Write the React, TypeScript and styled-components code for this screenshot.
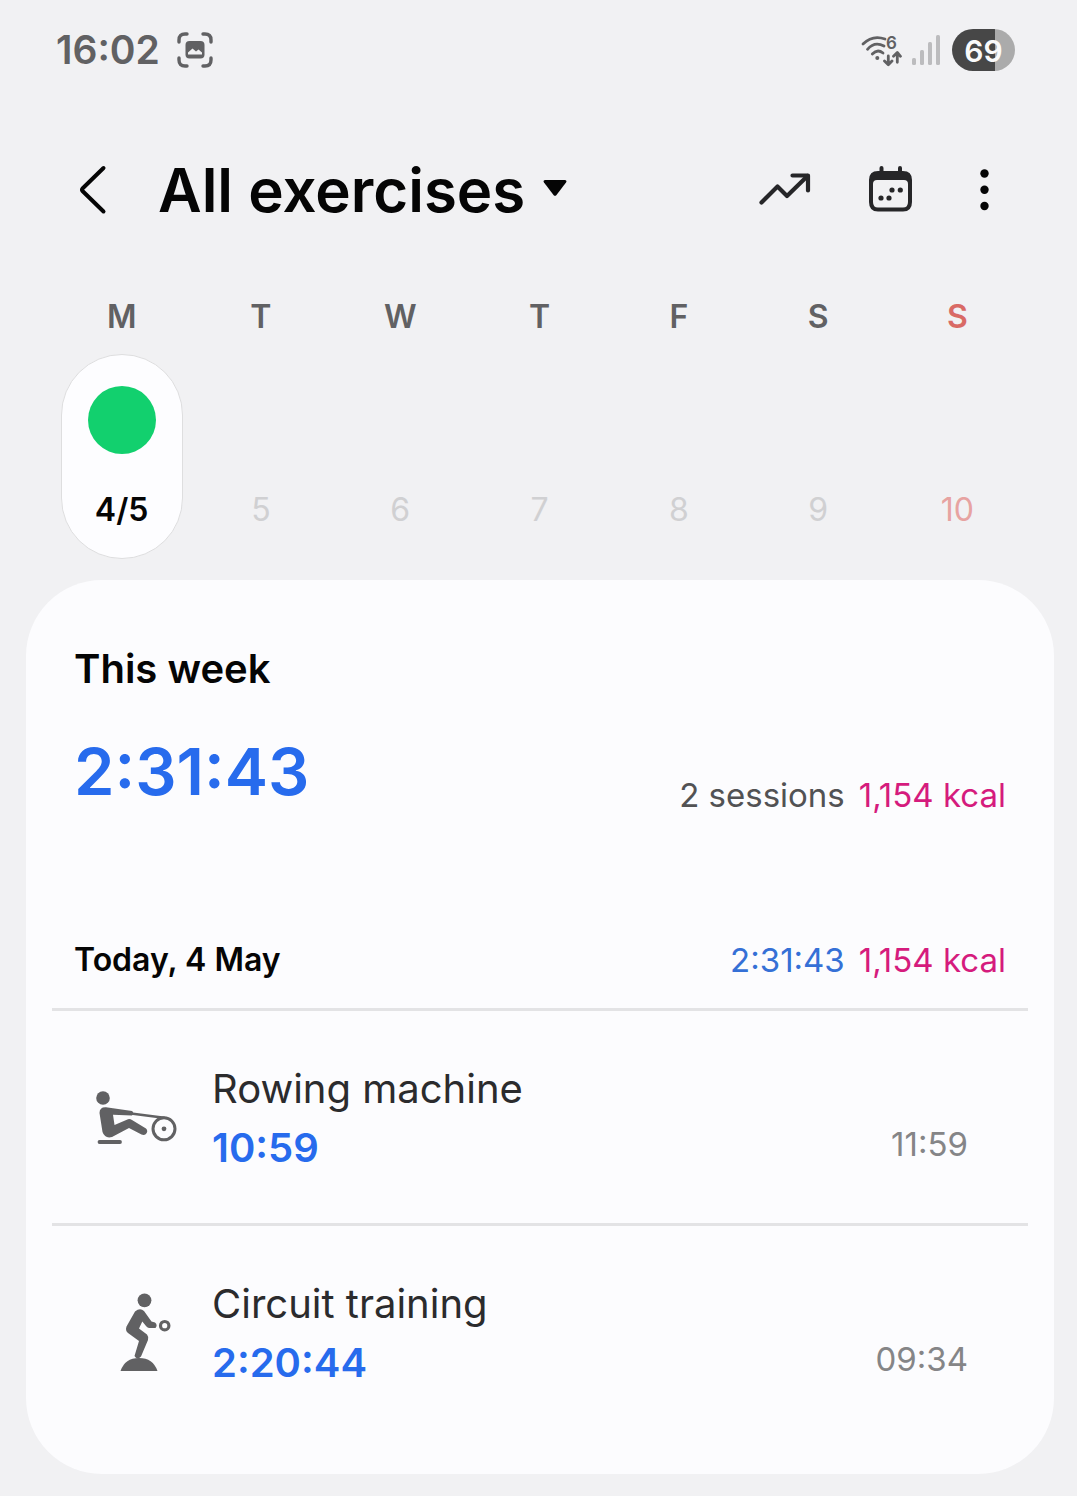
import React from 'react';
import styled, { createGlobalStyle } from 'styled-components';

const GlobalStyle = createGlobalStyle`
  *, *::before, *::after { box-sizing: border-box; }
  body {
    margin: 0;
    background: #f1f1f3;
    font-family: Inter, Roboto, sans-serif;
    color: #050505;
  }
  h1, h2, h3, p, ul { margin: 0; padding: 0; font-weight: inherit; font-size: inherit; }
  ul { list-style: none; }
  button { font: inherit; color: inherit; background: none; border: 0; padding: 0; cursor: pointer; }
  a { color: inherit; text-decoration: none; }
  svg { display: block; flex: none; }
`;

const BLUE = '#276bed';
const PINK = '#d51b7d';
const GREY = '#616163';

const Page = styled.div`
  padding-bottom: 21px;
`;

const StatusBar = styled.div`
  display: flex;
  align-items: center;
  justify-content: space-between;
  height: 100px;
  padding: 0 62px 0 56px;
  color: ${GREY};
`;

const StatusGroup = styled.div<{ $gap: number }>`
  display: flex;
  align-items: center;
  gap: ${(p) => p.$gap}px;
`;

const Clock = styled.span`
  font-size: 39px;
  line-height: 48px;
  font-weight: 600;
`;

const Battery = styled.span`
  display: flex;
  align-items: center;
  justify-content: center;
  width: 63px;
  height: 42px;
  padding-top: 2px;
  border-radius: 21px;
  background: linear-gradient(90deg, #474747 69%, #ababab 69%);
  color: #fafafa;
  font-size: 30px;
  line-height: 40px;
  font-weight: 600;
`;

const Header = styled.header`
  display: flex;
  align-items: center;
  justify-content: space-between;
  height: 80px;
  margin-top: 50px;
  padding: 0 73px 0 76px;
`;

const HeaderSide = styled.div<{ $gap: number }>`
  display: flex;
  align-items: center;
  gap: ${(p) => p.$gap}px;
`;

const IconButton = styled.button`
  display: flex;
`;

const FilterButton = styled.button`
  display: flex;
  align-items: center;
  gap: 18px;
  font-size: 60px;
  line-height: 72px;
  font-weight: 600;
  white-space: nowrap;
`;

const Week = styled.div`
  display: grid;
  grid-template-columns: repeat(7, 1fr);
  margin-top: 67px;
  padding: 0 50px 0 52px;
`;

const DayColumn = styled.div`
  display: flex;
  flex-direction: column;
  align-items: center;
  gap: 17px;
`;

const Weekday = styled.span<{ $sunday: boolean }>`
  font-size: 32px;
  line-height: 40px;
  font-weight: 600;
  color: ${(p) => (p.$sunday ? '#d96a65' : GREY)};
`;

const DayPill = styled.button<{ $selected: boolean; $sunday: boolean }>`
  display: flex;
  flex-direction: column;
  align-items: center;
  justify-content: flex-end;
  gap: 36px;
  width: 122px;
  height: 205px;
  padding-bottom: 28px;
  border: 1px solid ${(p) => (p.$selected ? '#dededf' : 'transparent')};
  border-radius: 61px;
  background: ${(p) => (p.$selected ? '#fdfdff' : 'transparent')};
  color: ${(p) => (p.$selected ? '#050505' : p.$sunday ? '#e7a3a1' : '#d0d0d2')};
  font-size: 32px;
  line-height: 40px;
  font-weight: ${(p) => (p.$selected ? 600 : 400)};
`;

const ActivityDot = styled.span`
  width: 68px;
  height: 68px;
  border-radius: 50%;
  background: #12d06e;
`;

const Card = styled.main`
  margin: 21px 23px 0 26px;
  padding: 65px 0 36px;
  border-radius: 76px;
  background: #fcfcfe;
`;

const CardTitle = styled.h2`
  padding: 0 48px;
  font-size: 40px;
  line-height: 48px;
  font-weight: 600;
`;

const Summary = styled.div<{ $top: number }>`
  display: flex;
  align-items: flex-end;
  justify-content: space-between;
  margin-top: ${(p) => p.$top}px;
  padding: 0 48px;
`;

const Total = styled.p`
  font-size: 65px;
  line-height: 86px;
  font-weight: 600;
  color: ${BLUE};
`;

const Stats = styled.p`
  display: flex;
  gap: 14px;
  font-size: 33px;
  line-height: 40px;
`;

const Stat = styled.span<{ $color: string }>`
  color: ${(p) => p.$color};
`;

const DayTitle = styled.h3`
  font-size: 32px;
  line-height: 40px;
  font-weight: 600;
`;

const SessionList = styled.ul`
  margin-top: 28px;
  padding: 0 26px;
`;

const SessionItem = styled.li`
  border-top: 3px solid #e3e3e5;
`;

const SessionLink = styled.a`
  display: flex;
  align-items: center;
  height: 212px;
  padding: 0 60px 0 38px;
`;

const SessionText = styled.div`
  flex: 1;
  margin-left: 30px;
  padding-top: 2px;
`;

const SessionName = styled.p`
  font-size: 40px;
  line-height: 60px;
  color: #2b2b2d;
`;

const SessionDuration = styled.p`
  font-size: 40px;
  line-height: 58px;
  font-weight: 600;
  color: ${BLUE};
`;

const SessionTime = styled.span`
  align-self: flex-end;
  margin-bottom: 59px;
  font-size: 33px;
  line-height: 40px;
  color: #858587;
`;

const CaptureIcon = () => (
  <svg width="36" height="36" viewBox="0 0 36 36" fill="none" stroke={GREY} strokeWidth="3.4" strokeLinecap="round">
    <path d="M2 10V8Q2 2 8 2H10M26 2H28Q34 2 34 8V10M34 26V28Q34 34 28 34H26M10 34H8Q2 34 2 28V26" />
    <rect x="8.5" y="9" width="19" height="17.5" rx="4" fill={GREY} stroke="none" />
    <path d="M11 22.500V20.500L15.500 16.500L19 19.500L21.500 17.500L25 20.500V22.500Z" fill="#f1f1f3" stroke="none" />
  </svg>
);

const WifiIcon = () => (
  <svg width="42" height="42" viewBox="0 -4 42 42" fill="none" stroke={GREY} strokeWidth="2.8" strokeLinecap="round">
    <path d="M3 11Q12.500 1.500 25 6M7.500 16.300Q14.500 8 24 13M12.300 21Q17.500 15.500 23 20" />
    <circle cx="17.300" cy="25" r="2" fill={GREY} stroke="none" />
    <path d="M28.300 23V31.500M24.500 28L28.300 31.800L32 28M37.300 29.300V20M33.500 23.300L37.300 19.500L40.500 23.300" strokeLinejoin="round" />
    <text x="26" y="16.300" fill={GREY} stroke="none" fontSize="17" fontWeight="600">6</text>
  </svg>
);

const SignalIcon = () => (
  <svg width="30" height="30" viewBox="0 0 30 30" fill="#bcbcbe">
    <rect x="0" y="23" width="4" height="7" rx="1.500" />
    <rect x="8" y="15" width="4" height="15" rx="1.500" />
    <rect x="16" y="7" width="4" height="23" rx="1.500" />
    <rect x="24" y="0" width="4" height="30" rx="1.500" />
  </svg>
);

const BackIcon = () => (
  <svg width="32" height="50" viewBox="0 0 32 50" fill="none" stroke="#050505" strokeWidth="4" strokeLinecap="round" strokeLinejoin="round">
    <path d="M27.500 3L6.500 23.500Q5.500 24.700 6.500 26L27.500 46.500" />
  </svg>
);

const CaretIcon = () => (
  <svg width="24" height="20" viewBox="0 0 24 20" fill="#050505">
    <path d="M2 0H22Q24.300 0.500 23 2.500L13.500 15Q12 16.700 10.500 15L1 2.500Q-0.300 0.500 2 0Z" />
  </svg>
);

const TrendIcon = () => (
  <svg width="60" height="50" viewBox="0 0 60 50" fill="none" stroke="#262628" strokeWidth="4.200" strokeLinecap="round" strokeLinejoin="round">
    <path d="M7.500 37.500L23.500 21.500L33 31L53.500 11" />
    <path d="M38.500 10.500H54V25.500" />
  </svg>
);

const CalendarIcon = () => (
  <svg width="48" height="50" viewBox="0 0 48 50" fill="none">
    <path d="M16.500 3V9M35 3V9" stroke="#262628" strokeWidth="4" strokeLinecap="round" />
    <path fillRule="evenodd" fill="#262628" d="M13 6H38Q47 6 47 15V37Q47 46.500 38 46.500H13Q4 46.500 4 37V15Q4 6 13 6ZM12 15Q8 15 8 19V37Q8 42.500 13 42.500H38Q43 42.500 43 37V19Q43 15 39 15Z" />
    <g fill="#262628">
      <circle cx="27" cy="25" r="2.600" />
      <circle cx="35.300" cy="25" r="2.600" />
      <circle cx="16" cy="33" r="2.600" />
      <circle cx="24" cy="33" r="2.600" />
    </g>
  </svg>
);

const MoreIcon = () => (
  <svg width="40" height="50" viewBox="0 0 40 50" fill="#050505">
    <circle cx="20.500" cy="8.500" r="4.200" />
    <circle cx="20.500" cy="24.800" r="4.200" />
    <circle cx="20.500" cy="41" r="4.200" />
  </svg>
);

const RowingIcon = () => (
  <svg width="92" height="92" viewBox="0 0 92 92" fill="none" stroke={GREY} strokeLinecap="round" strokeLinejoin="round">
    <circle cx="13" cy="27" r="6.800" fill={GREY} stroke="none" />
    <path d="M9.500 42Q9.500 36 16 36.300L42 40Q44.500 42 42 44.500L23 43.800L24.500 54L38 48.300Q40 47.700 42 49L56 57.500Q58.500 60 56 63Q54 64.500 51.500 63.500L39 57L22 66Q15 68 12.500 61Z" fill={GREY} stroke="none" />
    <path d="M41 42.500L74 46.800" strokeWidth="2.600" />
    <circle cx="74" cy="57.800" r="11" strokeWidth="3" />
    <circle cx="74" cy="57.800" r="2.400" fill={GREY} stroke="none" />
    <path d="M9.500 71H30" strokeWidth="3.800" />
  </svg>
);

const CircuitIcon = () => (
  <svg width="92" height="92" viewBox="0 0 92 92" fill="none" stroke={GREY} strokeLinecap="round" strokeLinejoin="round">
    <circle cx="54.500" cy="14.300" r="6.900" fill={GREY} stroke="none" />
    <path d="M45 25.500Q50 21.500 54 25L61.500 35.500L65 36.500Q68 39 65.500 42L59 42Q57 41.500 56 40L52.300 35.500L49 42.500L57 48.500Q59 51 58 54L51 70.500Q47 74.500 44.500 70L49 55L38 47Q35 44.500 36.500 40.500Z" fill={GREY} stroke="none" />
    <circle cx="74.700" cy="39.700" r="4.200" strokeWidth="3.200" />
    <path d="M30.500 85Q35 72 49 72Q63 72 67.500 85Z" fill={GREY} stroke="none" />
  </svg>
);

const days = [
  { letter: 'M', date: '4/5', name: 'Monday' },
  { letter: 'T', date: '5', name: 'Tuesday' },
  { letter: 'W', date: '6', name: 'Wednesday' },
  { letter: 'T', date: '7', name: 'Thursday' },
  { letter: 'F', date: '8', name: 'Friday' },
  { letter: 'S', date: '9', name: 'Saturday' },
  { letter: 'S', date: '10', name: 'Sunday' },
];

const sessions = [
  { name: 'Rowing machine', duration: '10:59', time: '11:59', Icon: RowingIcon },
  { name: 'Circuit training', duration: '2:20:44', time: '09:34', Icon: CircuitIcon },
];

export default function App() {
  return (
    <Page>
      <GlobalStyle />
      <StatusBar>
        <StatusGroup $gap={17}>
          <Clock>16:02</Clock>
          <CaptureIcon />
        </StatusGroup>
        <StatusGroup $gap={10}>
          <WifiIcon />
          <SignalIcon />
          <Battery>69</Battery>
        </StatusGroup>
      </StatusBar>

      <Header>
        <HeaderSide $gap={50}>
          <IconButton type="button" aria-label="Back">
            <BackIcon />
          </IconButton>
          <h1>
            <FilterButton type="button" aria-haspopup="menu">
              All exercises
              <CaretIcon />
            </FilterButton>
          </h1>
        </HeaderSide>
        <HeaderSide $gap={51}>
          <IconButton type="button" aria-label="Trends">
            <TrendIcon />
          </IconButton>
          <IconButton type="button" aria-label="Calendar">
            <CalendarIcon />
          </IconButton>
          <IconButton type="button" aria-label="More options">
            <MoreIcon />
          </IconButton>
        </HeaderSide>
      </Header>

      <Week>
        {days.map((day, i) => (
          <DayColumn key={day.name}>
            <Weekday $sunday={i === 6}>{day.letter}</Weekday>
            <DayPill type="button" aria-pressed={i === 0} $selected={i === 0} $sunday={i === 6}>
              {i === 0 && <ActivityDot />}
              <span>{day.date}</span>
            </DayPill>
          </DayColumn>
        ))}
      </Week>

      <Card>
        <CardTitle>This week</CardTitle>
        <Summary $top={36}>
          <Total>2:31:43</Total>
          <Stats>
            <Stat $color="#525254">2 sessions</Stat>
            <Stat $color={PINK}>1,154 kcal</Stat>
          </Stats>
        </Summary>
        <Summary $top={125}>
          <DayTitle>Today, 4 May</DayTitle>
          <Stats>
            <Stat $color="#3570d6">2:31:43</Stat>
            <Stat $color={PINK}>1,154 kcal</Stat>
          </Stats>
        </Summary>
        <SessionList>
          {sessions.map(({ name, duration, time, Icon }) => (
            <SessionItem key={name}>
              <SessionLink href="#">
                <Icon />
                <SessionText>
                  <SessionName>{name}</SessionName>
                  <SessionDuration>{duration}</SessionDuration>
                </SessionText>
                <SessionTime>{time}</SessionTime>
              </SessionLink>
            </SessionItem>
          ))}
        </SessionList>
      </Card>
    </Page>
  );
}
